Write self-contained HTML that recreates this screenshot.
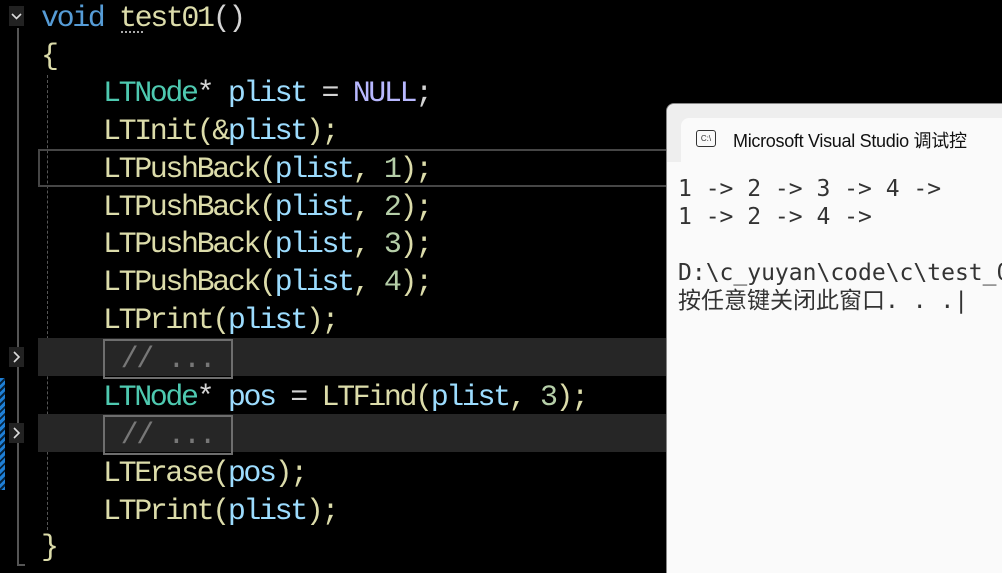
<!DOCTYPE html>
<html><head><meta charset="utf-8"><style>
html,body{margin:0;width:1002px;height:573px;overflow:hidden}
body{background:#000;position:relative;font-family:"Liberation Mono",monospace}
.l{position:absolute;left:0;height:38px;line-height:38px;font-size:30px;letter-spacing:-2.4px;white-space:pre;color:#dcdcaa}
.k{color:#569cd6}.t{color:#4ec9b0}.f{color:#dcdcaa}.v{color:#9cdcfe}.n{color:#b5cea8}.m{color:#b8b8ff}.p{color:#d4d4d4}
.band{position:absolute;left:38px;width:628px;height:38px;background:#262626}
.box{position:absolute;left:103px;width:126px;height:36px;border:2px solid #6e6e6e;color:#777;font-size:30px;line-height:38px;letter-spacing:-2.4px;white-space:pre}
.fold{position:absolute;left:9px;width:15px;height:20px;background:#222}
</style></head><body>
<div style="position:absolute;left:17px;top:28px;width:2px;height:538px;background:#555"></div>
<div style="position:absolute;left:17px;top:564px;width:8px;height:2px;background:#555"></div>
<div style="position:absolute;left:47px;top:75px;width:0;height:455px;border-left:1px dashed #555"></div>
<div style="position:absolute;left:0;top:378px;width:5px;height:112px;background:repeating-linear-gradient(135deg,#1e7fd6 0 3px,#05243f 3px 5px)"></div>
<svg class="fold" style="top:6px" viewBox="0 0 15 20"><rect width="15" height="20" fill="#222"/><path d="M3 8 L7.5 12.5 L12 8" stroke="#ddd" stroke-width="1.6" fill="none"/></svg>
<svg class="fold" style="top:347px" viewBox="0 0 15 20"><rect width="15" height="20" fill="#222"/><path d="M5 5 L10 10 L5 15" stroke="#ddd" stroke-width="1.6" fill="none"/></svg>
<svg class="fold" style="top:423px" viewBox="0 0 15 20"><rect width="15" height="20" fill="#222"/><path d="M5 5 L10 10 L5 15" stroke="#ddd" stroke-width="1.6" fill="none"/></svg>
<div style="position:absolute;left:38px;top:149px;width:626px;height:34px;border:2px solid #464646"></div>
<div class="band" style="top:338px"></div><div class="band" style="top:414px"></div>
<div class="l" style="top:0px;left:41px"><span class="k">void</span> test01<span class="p">()</span></div>
<div style="position:absolute;left:121px;top:31px;width:22px;border-top:2px dotted #aaa"></div>
<div class="l" style="top:38px;left:41px">{</div>
<div class="l" style="top:75px;left:103px"><span class="t">LTNode</span><span class="p">*</span> <span class="v">plist</span> <span class="p">=</span> <span class="m">NULL</span><span class="p">;</span></div>
<div class="l" style="top:113px;left:103px">LTInit(&amp;<span class="v">plist</span>);</div>
<div class="l" style="top:151px;left:103px">LTPushBack(<span class="v">plist</span>, <span class="n">1</span>);</div>
<div class="l" style="top:189px;left:103px">LTPushBack(<span class="v">plist</span>, <span class="n">2</span>);</div>
<div class="l" style="top:226px;left:103px">LTPushBack(<span class="v">plist</span>, <span class="n">3</span>);</div>
<div class="l" style="top:264px;left:103px">LTPushBack(<span class="v">plist</span>, <span class="n">4</span>);</div>
<div class="l" style="top:302px;left:103px">LTPrint(<span class="v">plist</span>);</div>
<div class="box" style="top:339px"> // ...</div>
<div class="l" style="top:379px;left:103px"><span class="t">LTNode</span><span class="p">*</span> <span class="v">pos</span> <span class="p">=</span> LTFind(<span class="v">plist</span>, <span class="n">3</span>);</div>
<div class="box" style="top:415px"> // ...</div>
<div class="l" style="top:455px;left:103px">LTErase(<span class="v">pos</span>);</div>
<div class="l" style="top:493px;left:103px">LTPrint(<span class="v">plist</span>);</div>
<div class="l" style="top:529px;left:41px">}</div>
<div style="position:absolute;left:666px;top:103px;width:340px;height:480px;background:#fafafa;border-radius:8px 0 0 0;border:1px solid #888;border-right:0;border-bottom:0">
 <div style="position:absolute;left:0;top:0;right:0;height:58px;background:#eeeeee;border-radius:8px 0 0 0"></div>
 <div style="position:absolute;left:14px;top:14px;right:0;height:44px;background:#fafafa;border-radius:8px 0 0 0"></div>
 <div style="position:absolute;left:29px;top:26px;width:18px;height:15px;border:1.5px solid #333;border-radius:3px;font-size:8px;line-height:15px;text-align:center;color:#333;font-family:'Liberation Sans',sans-serif">C:\</div>
 <div style="position:absolute;left:66px;top:23px;font:18px 'Liberation Sans','Noto Sans CJK SC',sans-serif;color:#111;white-space:nowrap;letter-spacing:-0.3px">Microsoft Visual Studio 调试控</div>
 <div style="position:absolute;left:11px;top:71px;font-size:23px;line-height:28px;color:#333;white-space:pre;font-family:'DejaVu Sans Mono','Noto Sans CJK SC',monospace">1 -&gt; 2 -&gt; 3 -&gt; 4 -&gt;
1 -&gt; 2 -&gt; 4 -&gt;

D:\c_yuyan\code\c\test_0
按任意键关闭此窗口. . .|</div>
</div>
</body></html>
